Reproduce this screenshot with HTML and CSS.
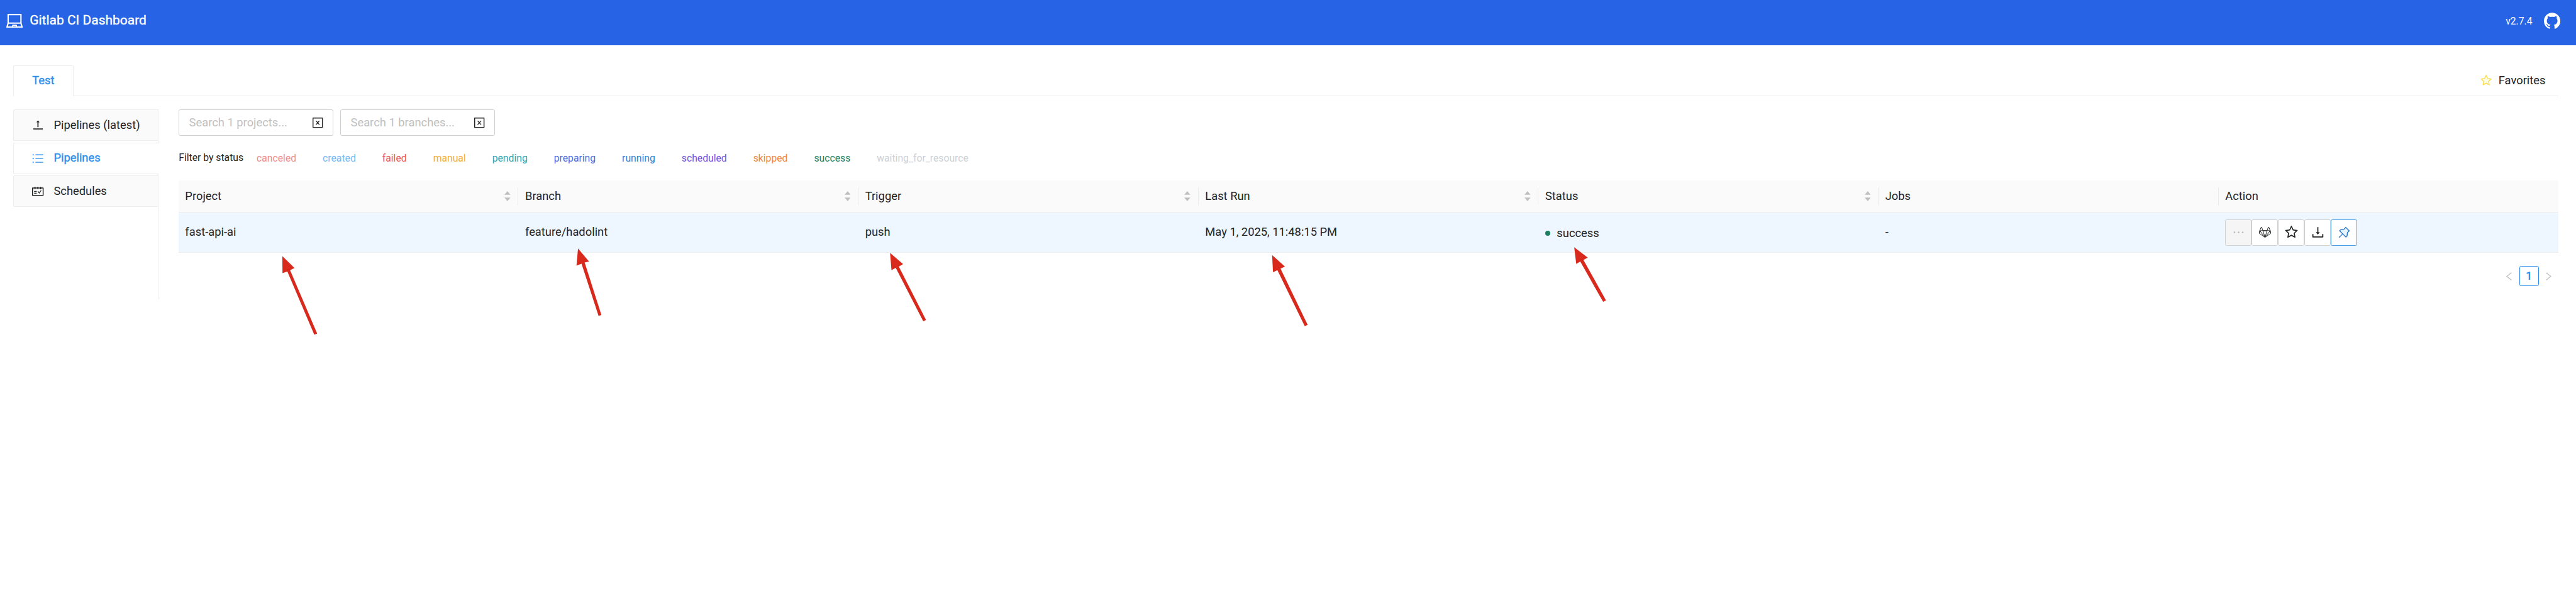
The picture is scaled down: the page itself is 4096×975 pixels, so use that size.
FILE: index.html
```html
<!DOCTYPE html>
<html lang="en">
<head>
<meta charset="utf-8">
<title>Gitlab CI Dashboard</title>
<link rel="stylesheet" href="styles.css">
</head>
<body>
<svg class="defs" aria-hidden="true">
  <symbol id="star" viewBox="64 64 896 896"><path d="M908.1 353.1l-253.9-36.9L540.7 86.1c-3.1-6.3-8.2-11.4-14.5-14.5-15.8-7.8-35-1.3-42.9 14.5L369.8 316.2l-253.9 36.9c-7 1-13.4 4.3-18.3 9.3a32.05 32.05 0 0 0 .6 45.3l183.7 179.1-43.4 252.9a31.95 31.95 0 0 0 46.4 33.7L512 754l227.1 119.4c6.2 3.3 13.4 4.4 20.3 3.2 17.4-3 29.1-19.5 26.1-36.9l-43.4-252.9 183.7-179.1c5-4.9 8.3-11.3 9.3-18.3 2.7-17.5-9.5-33.7-27-36.3zM664.8 561.6l36.1 210.3L512 672.7 323.1 772l36.1-210.3-152.8-149L417.6 382 512 190.7 606.4 382l211.2 30.7-152.8 148.9z"/></symbol>
  <symbol id="close-square" viewBox="64 64 896 896"><path d="M354 671h58.9c4.7 0 9.2-2.1 12.3-5.7L512 561.8l86.8 103.5c3 3.6 7.5 5.7 12.3 5.7H670c6.8 0 10.5-7.9 6.1-13.1L553.8 512l122.4-145.9c4.4-5.2.7-13.1-6.1-13.1h-58.9c-4.7 0-9.2 2.1-12.3 5.7L512 462.2l-86.8-103.5c-3-3.6-7.5-5.7-12.3-5.7H354c-6.8 0-10.5 7.9-6.1 13.1L470.2 512 347.9 657.9A7.95 7.95 0 0 0 354 671z"/><path d="M880 112H144c-17.7 0-32 14.3-32 32v736c0 17.7 14.3 32 32 32h736c17.7 0 32-14.3 32-32V144c0-17.7-14.3-32-32-32zm-40 728H184V184h656v656z"/></symbol>
  <symbol id="sorter" viewBox="0 0 74 122"><path d="M37 0L74 44H0zM37 122L0 78h74z"/></symbol>
</svg>

<header class="header">
  <div class="brand">
    <svg class="brand-icon" viewBox="64 64 896 896"><path d="M956.9 845.1L896.4 632V168c0-17.7-14.3-32-32-32h-704c-17.7 0-32 14.3-32 32v464L67.9 845.1C60.4 866 75.8 888 98 888h828.8c22.2 0 37.6-22 30.1-42.9zM200.4 208h624v395h-624V208zm228.3 608l8.1-37h150.3l8.1 37H428.7zm224 0l-19.1-86.7c-.8-3.7-4.1-6.3-7.8-6.3H398.2c-3.8 0-7 2.6-7.8 6.3L371.3 816H151l42.3-149h638.2l42.3 149H652.7z"/></svg>
    <span class="brand-name">Gitlab CI Dashboard</span>
  </div>
  <div class="meta">
    <span class="version">v2.7.4</span>
    <svg class="github" viewBox="64 64 896 896"><path d="M511.6 76.3C264.3 76.2 64 276.4 64 523.5 64 718.9 189.3 885 363.8 946c23.5 5.9 19.9-10.8 19.9-22.2v-77.5c-135.7 15.9-141.2-73.9-150.3-88.9C215 726 171.5 718 184.5 703c30.9-15.9 62.4 4 98.9 57.9 26.4 39.1 77.9 32.5 104 26 5.7-23.5 17.9-44.5 34.7-60.8-140.6-25.2-199.2-111-199.2-213 0-49.5 16.3-95 48.3-131.7-20.4-60.5 1.9-112.3 4.9-120 58.1-5.2 118.5 41.6 123.2 45.3 33-8.9 70.7-13.6 112.9-13.6 42.4 0 80.2 4.9 113.5 13.9 11.3-8.6 67.3-48.8 121.3-43.9 2.9 7.7 24.7 58.3 5.5 118 32.4 36.8 48.9 82.7 48.9 132.3 0 102.2-59 188.1-200 212.9a127.5 127.5 0 0 1 38.1 91v112.5c.8 9 0 17.9 15 17.9 177.1-59.7 304.6-227 304.6-424.1 0-247.2-200.4-447.3-447.5-447.3z"/></svg>
  </div>
</header>

<nav class="group-tabs">
  <div class="group-tab">Test</div>
  <div class="group-rest">
    <button class="favorites"><svg class="fav-icon" viewBox="64 64 896 896"><path class="fav-fill" d="M512 190.7L417.6 382l-211.2 30.7 152.8 149L323.1 772 512 672.7l188.9 99.2-36.1-210.3 152.8-148.9L606.4 382z"/><use href="#star" x="64" y="64" width="896" height="896"/></svg>Favorites</button>
  </div>
</nav>

<main class="main">
  <aside class="side">
    <div class="side-tab"><svg class="side-icon" viewBox="0 0 84 84"><path d="M9 65h69v8H9zM39 19h8v37h-8zM43 7l12 14H31z"/></svg>Pipelines (latest)</div>
    <div class="side-tab active"><svg class="side-icon" viewBox="0 0 84 84"><path d="M25 12h56v6H25zM25 39h56v6H25zM25 66h56v6H25z"/><circle cx="8" cy="15" r="5"/><circle cx="8" cy="42" r="5"/><circle cx="8" cy="69" r="5"/></svg>Pipelines</div>
    <div class="side-tab"><svg class="side-icon" viewBox="64 64 896 896"><path d="M928 224H768v-56c0-4.4-3.6-8-8-8h-56c-4.4 0-8 3.6-8 8v56H548v-56c0-4.4-3.6-8-8-8h-56c-4.4 0-8 3.6-8 8v56H328v-56c0-4.4-3.6-8-8-8h-56c-4.4 0-8 3.6-8 8v56H96c-17.7 0-32 14.3-32 32v576c0 17.7 14.3 32 32 32h832c17.7 0 32-14.3 32-32V256c0-17.7-14.3-32-32-32zm-40 568H136V296h120v56c0 4.4 3.6 8 8 8h56c4.4 0 8-3.6 8-8v-56h148v56c0 4.4 3.6 8 8 8h56c4.4 0 8-3.6 8-8v-56h148v56c0 4.4 3.6 8 8 8h56c4.4 0 8-3.6 8-8v-56h120v496zM416 496H232c-4.4 0-8 3.6-8 8v48c0 4.4 3.6 8 8 8h184c4.4 0 8-3.6 8-8v-48c0-4.4-3.6-8-8-8zm0 136H232c-4.4 0-8 3.6-8 8v48c0 4.4 3.6 8 8 8h184c4.4 0 8-3.6 8-8v-48c0-4.4-3.6-8-8-8zm308.2-177.4L620.6 598.3l-52.8-73.1c-3-4.2-7.8-6.6-12.9-6.6H500c-6.5 0-10.3 7.4-6.5 12.7l114.1 158.2a15.9 15.9 0 0 0 25.8 0l165-228.7c3.8-5.3 0-12.7-6.5-12.7H737c-5-.1-9.8 2.4-12.8 6.5z"/></svg>Schedules</div>
  </aside>

  <section class="content">
    <div class="searches">
      <div class="search"><span>Search 1 projects...</span><svg class="clear"><use href="#close-square"/></svg></div>
      <div class="search"><span>Search 1 branches...</span><svg class="clear"><use href="#close-square"/></svg></div>
    </div>
    <div class="filters">
      <span class="filter-label">Filter by status</span>
      <span class="st canceled">canceled</span>
      <span class="st created">created</span>
      <span class="st failed">failed</span>
      <span class="st manual">manual</span>
      <span class="st pending">pending</span>
      <span class="st preparing">preparing</span>
      <span class="st running">running</span>
      <span class="st scheduled">scheduled</span>
      <span class="st skipped">skipped</span>
      <span class="st success">success</span>
      <span class="st waiting">waiting_for_resource</span>
    </div>
    <div class="row head">
      <div class="cell">Project<svg class="sorter"><use href="#sorter"/></svg></div>
      <div class="cell">Branch<svg class="sorter"><use href="#sorter"/></svg></div>
      <div class="cell">Trigger<svg class="sorter"><use href="#sorter"/></svg></div>
      <div class="cell">Last Run<svg class="sorter"><use href="#sorter"/></svg></div>
      <div class="cell">Status<svg class="sorter"><use href="#sorter"/></svg></div>
      <div class="cell">Jobs</div>
      <div class="cell">Action</div>
    </div>
    <div class="row body">
      <div class="cell">fast-api-ai</div>
      <div class="cell">feature/hadolint</div>
      <div class="cell">push</div>
      <div class="cell">May 1, 2025, 11:48:15 PM</div>
      <div class="cell status"><i class="dot"></i>success</div>
      <div class="cell">-</div>
      <div class="cell">
        <button class="btn disabled"><svg viewBox="0 0 96 96"><circle cx="18" cy="48" r="6"/><circle cx="48" cy="48" r="6"/><circle cx="78" cy="48" r="6"/></svg></button>
        <button class="btn"><svg class="lines" viewBox="0 0 96 96"><path d="M10 36L20 11h4l9 25h30l9-25h4l10 25 3 20-41 29L7 56zM10 36h76M7 56l3-20 38 49M89 56l-3-20-38 49M33 36l15 49 15-49"/></svg></button>
        <button class="btn"><svg><use href="#star"/></svg></button>
        <button class="btn"><svg viewBox="64 64 896 896"><path d="M505.7 661a8 8 0 0 0 12.6 0l112-141.7c4.1-5.2.4-12.9-6.3-12.9h-74.1V168c0-4.4-3.6-8-8-8h-60c-4.4 0-8 3.6-8 8v338.3H400c-6.7 0-10.4 7.7-6.3 12.9l112 141.8zM878 626h-60c-4.4 0-8 3.6-8 8v154H214V634c0-4.4-3.6-8-8-8h-60c-4.4 0-8 3.6-8 8v198c0 17.7 14.3 32 32 32h684c17.7 0 32-14.3 32-32V634c0-4.4-3.6-8-8-8z"/></svg></button>
        <button class="btn pinned"><svg viewBox="0 0 96 96"><path d="M59 12L85 38 71 51 69 74 60 83 14 37 23 29 46 26zM36 60L10 86"/></svg></button>
      </div>
    </div>
    <div class="pager">
      <span class="page"><svg viewBox="0 0 40 60"><path d="M38 3L4 30l34 27"/></svg></span>
      <span class="page current">1</span>
      <span class="page"><svg viewBox="0 0 40 60"><path d="M2 3l34 27L2 57"/></svg></span>
    </div>
  </section>
</main>

<svg class="arrows" viewBox="0 0 6248 1488" preserveAspectRatio="none">
  <path d="M684.7 621.7L714.3 650.7 703.6 655.7 769.4 810 762.2 812.3 696.9 659 685.2 663.3z"/>
  <path d="M1402 603.3L1428.8 634.7 1418.1 637.3 1458.7 764.7 1451.8 767 1410.5 640.3 1398.2 644.7z"/>
  <path d="M2158.8 614L2190.4 641 2180.1 647 2246.1 776.7 2239.2 779.7 2172.6 650.3 2162.3 655.7z"/>
  <path d="M3085.5 619.3L3116.6 647 3105.9 652 3171.7 788.7 3164.6 791.7 3098.3 656 3087.6 660.7z"/>
  <path d="M3818.2 600L3851.1 625.3 3840.6 631 3895.3 729 3888.3 732.7 3832.9 635 3823.1 640.7z"/>
</svg>
</body>
</html>
```
FILE: styles.css
```css
* { box-sizing: border-box; }

/* 1rem equals ten layout units */
html { font-size: 13.1114px; }

body {
  margin: 0;
  width: 4096px;
  height: 975px;
  overflow: hidden;
  position: relative;
  background: #fff;
  color: #222426;
  font-family: Roboto, "Liberation Sans", sans-serif;
  font-size: 1.4rem;
  line-height: 2.2rem;
}

svg { display: block; fill: currentColor; flex: none; }
button { font: inherit; color: inherit; background: none; border: 0; padding: 0; margin: 0; }
.defs { position: absolute; width: 0; height: 0; }

.header {
  display: flex;
  justify-content: space-between;
  align-items: flex-start;
  height: 5.5rem;
  padding: 1.5rem 1.9rem 0 0.8rem;
  background: #2763e5;
  color: #fff;
}
.brand, .meta { display: flex; align-items: center; height: 2rem; }
.brand-icon, .github { width: 2rem; height: 2rem; }
.brand-name { margin-left: 0.8rem; font-size: 1.6rem; -webkit-text-stroke: 0.35px currentColor; }
.version { margin-right: 1.4rem; font-size: 1.2rem; margin-top: 0.2rem; }

.group-tabs { display: flex; height: 3.8rem; margin: 2.4rem 2.1rem 0 1.6rem; }
.group-tab {
  width: 7.3rem;
  padding-top: 0.75rem;
  text-align: center;
  color: #2b8eec;
  -webkit-text-stroke: 0.35px currentColor;
  border: 1px solid #ededed;
  border-bottom: 0;
  border-radius: 0.2rem 0.2rem 0 0;
}
.group-rest { flex: 1; display: flex; justify-content: flex-end; border-bottom: 1px solid #ededed; }
.favorites { display: flex; align-items: center; height: 3.2rem; margin-top: 0.28rem; padding-right: 1.6rem; }
.fav-icon { width: 1.4rem; height: 1.4rem; margin-right: 0.8rem; color: #fadb4a; }
.fav-fill { fill: #feffe6; }

.main { display: flex; margin: 1.6rem 2.1rem 0 1.6rem; }
.side {
  display: flex;
  flex-direction: column;
  gap: 0.2rem;
  width: 17.65rem;
  height: 23rem;
  border-right: 1px solid #ededed;
}
.side-tab {
  display: flex;
  align-items: center;
  height: 3.8rem;
  padding-left: 2.24rem;
  background: #fafafa;
  border: 1px solid #ededed;
  border-right: 0;
  border-radius: 0.2rem 0 0 0.2rem;
}
.side-tab.active {
  margin-right: -1px;
  background: #fff;
  color: #2b8eec;
  -webkit-text-stroke: 0.35px currentColor;
}
.side-icon { width: 1.4rem; height: 1.4rem; margin-right: 1.2rem; }

.content { flex: 1; padding-left: 2.4rem; }
.searches { display: flex; gap: 0.8rem; }
.search {
  display: flex;
  align-items: center;
  justify-content: space-between;
  width: 18.8rem;
  height: 3.2rem;
  padding: 0 1.13rem 0 1.2rem;
  color: #bfbfbf;
  border: 1px solid #d0d0d0;
  border-radius: 0.2rem;
}
.clear { width: 1.4rem; height: 1.4rem; color: #222426; }

.filters { display: flex; align-items: center; height: 2.2rem; margin-top: 1.6rem; font-size: 1.2rem; }
.filter-label { padding-left: 0.03rem; }
.st { margin: 0 1.602rem; padding-top: 0.1rem; }
.canceled { color: #f28b8b; }
.created { color: #74b9f5; }
.failed { color: #ee5555; }
.manual { color: #f0ad3c; }
.pending { color: #2ba3b3; }
.preparing { color: #4a6bdc; }
.running { color: #2d83d3; }
.scheduled { color: #7350dd; }
.skipped { color: #f0853a; }
.success { color: #1d8060; }
.waiting { color: #cdd1d6; }

.row { display: grid; grid-template-columns: repeat(7, 1fr); }
.cell { display: flex; align-items: center; padding: 0 0.8rem; }
.head {
  height: 3.9rem;
  margin-top: 1.6rem;
  background: #fafafa;
  border-bottom: 1px solid #ededed;
  border-radius: 0.2rem 0.2rem 0 0;
}
.head .cell {
  justify-content: space-between;
  height: 2.25rem;
  margin-top: 0.8rem;
  border-right: 1px solid #ebebeb;
}
.head .cell:last-child { border-right: 0; }
.sorter { width: 0.74rem; height: 1.22rem; margin-right: 0.1rem; color: #bfbfbf; }
.body { height: 4.9rem; background: #eef7ff; border-bottom: 1px solid #ededed; }
.status { padding-top: 0.2rem; }
.dot { width: 0.6rem; height: 0.6rem; margin-right: 0.8rem; border-radius: 50%; background: #1d8060; }

.btn {
  display: flex;
  align-items: center;
  justify-content: center;
  width: 3.2rem;
  height: 3.2rem;
  flex: none;
  background: #fff;
  border: 1px solid #d0d0d0;
  border-radius: 0.2rem;
}
.btn svg { width: 1.6rem; height: 1.6rem; }
.btn.disabled { background: #f5f5f5; color: #b8b8b8; }
.btn.pinned { border-color: #4a9de8; color: #1e6fca; }
.btn.pinned path { fill: #e6f4ff; stroke: currentColor; stroke-width: 6; }
.lines { fill: none; stroke: currentColor; stroke-width: 4.5; stroke-linejoin: round; }

.pager { display: flex; justify-content: flex-end; margin-top: 1.6rem; }
.page {
  display: flex;
  align-items: center;
  justify-content: center;
  width: 2.4rem;
  height: 2.4rem;
  color: #bfbfbf;
}
.page svg { width: 0.67rem; height: 1rem; fill: none; stroke: currentColor; stroke-width: 6; }
.page.current { color: #2b8eec; border: 1px solid #2b8eec; border-radius: 0.2rem; font-weight: 500; }

.arrows { position: absolute; left: 0; top: 0; width: 4096px; height: 975px; color: #d9291c; }
```
